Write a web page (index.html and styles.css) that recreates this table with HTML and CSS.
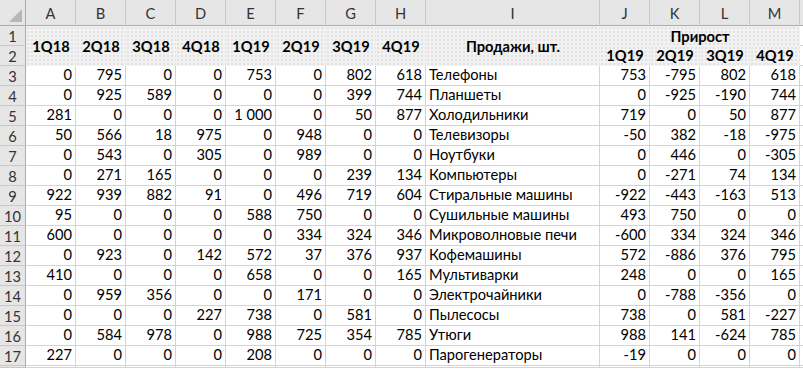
FILE: index.html
```html
<!DOCTYPE html>
<html>
<head>
<meta charset="utf-8">
<link rel="stylesheet" href="styles.css">
</head>
<body>
<div class="sheet">
  <div class="ch corner"><span class="tri"></span></div>
  <div class="ch">A</div><div class="ch">B</div><div class="ch">C</div><div class="ch">D</div>
  <div class="ch">E</div><div class="ch">F</div><div class="ch">G</div><div class="ch">H</div>
  <div class="ch">I</div><div class="ch">J</div><div class="ch">K</div><div class="ch">L</div><div class="ch">M</div>
  <div class="ch blank"></div>

  <div class="rh r1">1</div>
  <div class="hd span2 c2">1Q18</div>
  <div class="hd span2 c3">2Q18</div>
  <div class="hd span2 c4">3Q18</div>
  <div class="hd span2 c5">4Q18</div>
  <div class="hd span2 c6">1Q19</div>
  <div class="hd span2 c7">2Q19</div>
  <div class="hd span2 c8">3Q19</div>
  <div class="hd span2 c9">4Q19</div>
  <div class="hd span2 c10">Продажи, шт.</div>
  <div class="hd top">Прирост</div>
  <div class="cell nc n1"></div>
  <div class="rh r2">2</div>
  <div class="hd sub c11">1Q19</div>
  <div class="hd sub c12">2Q19</div>
  <div class="hd sub c13">3Q19</div>
  <div class="hd sub c14">4Q19</div>
  <div class="cell nc n2"></div>

  <div class="rh">3</div><div class="cell">0</div><div class="cell">795</div><div class="cell">0</div><div class="cell">0</div><div class="cell">753</div><div class="cell">0</div><div class="cell">802</div><div class="cell">618</div><div class="cell name">Телефоны</div><div class="cell">753</div><div class="cell">-795</div><div class="cell">802</div><div class="cell">618</div><div class="cell nc"></div>
  <div class="rh">4</div><div class="cell">0</div><div class="cell">925</div><div class="cell">589</div><div class="cell">0</div><div class="cell">0</div><div class="cell">0</div><div class="cell">399</div><div class="cell">744</div><div class="cell name">Планшеты</div><div class="cell">0</div><div class="cell">-925</div><div class="cell">-190</div><div class="cell">744</div><div class="cell nc"></div>
  <div class="rh">5</div><div class="cell">281</div><div class="cell">0</div><div class="cell">0</div><div class="cell">0</div><div class="cell">1 000</div><div class="cell">0</div><div class="cell">50</div><div class="cell">877</div><div class="cell name">Холодильники</div><div class="cell">719</div><div class="cell">0</div><div class="cell">50</div><div class="cell">877</div><div class="cell nc"></div>
  <div class="rh">6</div><div class="cell">50</div><div class="cell">566</div><div class="cell">18</div><div class="cell">975</div><div class="cell">0</div><div class="cell">948</div><div class="cell">0</div><div class="cell">0</div><div class="cell name">Телевизоры</div><div class="cell">-50</div><div class="cell">382</div><div class="cell">-18</div><div class="cell">-975</div><div class="cell nc"></div>
  <div class="rh">7</div><div class="cell">0</div><div class="cell">543</div><div class="cell">0</div><div class="cell">305</div><div class="cell">0</div><div class="cell">989</div><div class="cell">0</div><div class="cell">0</div><div class="cell name">Ноутбуки</div><div class="cell">0</div><div class="cell">446</div><div class="cell">0</div><div class="cell">-305</div><div class="cell nc"></div>
  <div class="rh">8</div><div class="cell">0</div><div class="cell">271</div><div class="cell">165</div><div class="cell">0</div><div class="cell">0</div><div class="cell">0</div><div class="cell">239</div><div class="cell">134</div><div class="cell name">Компьютеры</div><div class="cell">0</div><div class="cell">-271</div><div class="cell">74</div><div class="cell">134</div><div class="cell nc"></div>
  <div class="rh">9</div><div class="cell">922</div><div class="cell">939</div><div class="cell">882</div><div class="cell">91</div><div class="cell">0</div><div class="cell">496</div><div class="cell">719</div><div class="cell">604</div><div class="cell name">Стиральные машины</div><div class="cell">-922</div><div class="cell">-443</div><div class="cell">-163</div><div class="cell">513</div><div class="cell nc"></div>
  <div class="rh">10</div><div class="cell">95</div><div class="cell">0</div><div class="cell">0</div><div class="cell">0</div><div class="cell">588</div><div class="cell">750</div><div class="cell">0</div><div class="cell">0</div><div class="cell name">Сушильные машины</div><div class="cell">493</div><div class="cell">750</div><div class="cell">0</div><div class="cell">0</div><div class="cell nc"></div>
  <div class="rh">11</div><div class="cell">600</div><div class="cell">0</div><div class="cell">0</div><div class="cell">0</div><div class="cell">0</div><div class="cell">334</div><div class="cell">324</div><div class="cell">346</div><div class="cell name">Микроволновые печи</div><div class="cell">-600</div><div class="cell">334</div><div class="cell">324</div><div class="cell">346</div><div class="cell nc"></div>
  <div class="rh">12</div><div class="cell">0</div><div class="cell">923</div><div class="cell">0</div><div class="cell">142</div><div class="cell">572</div><div class="cell">37</div><div class="cell">376</div><div class="cell">937</div><div class="cell name">Кофемашины</div><div class="cell">572</div><div class="cell">-886</div><div class="cell">376</div><div class="cell">795</div><div class="cell nc"></div>
  <div class="rh">13</div><div class="cell">410</div><div class="cell">0</div><div class="cell">0</div><div class="cell">0</div><div class="cell">658</div><div class="cell">0</div><div class="cell">0</div><div class="cell">165</div><div class="cell name">Мультиварки</div><div class="cell">248</div><div class="cell">0</div><div class="cell">0</div><div class="cell">165</div><div class="cell nc"></div>
  <div class="rh">14</div><div class="cell">0</div><div class="cell">959</div><div class="cell">356</div><div class="cell">0</div><div class="cell">0</div><div class="cell">171</div><div class="cell">0</div><div class="cell">0</div><div class="cell name">Электрочайники</div><div class="cell">0</div><div class="cell">-788</div><div class="cell">-356</div><div class="cell">0</div><div class="cell nc"></div>
  <div class="rh">15</div><div class="cell">0</div><div class="cell">0</div><div class="cell">0</div><div class="cell">227</div><div class="cell">738</div><div class="cell">0</div><div class="cell">581</div><div class="cell">0</div><div class="cell name">Пылесосы</div><div class="cell">738</div><div class="cell">0</div><div class="cell">581</div><div class="cell">-227</div><div class="cell nc"></div>
  <div class="rh">16</div><div class="cell">0</div><div class="cell">584</div><div class="cell">978</div><div class="cell">0</div><div class="cell">988</div><div class="cell">725</div><div class="cell">354</div><div class="cell">785</div><div class="cell name">Утюги</div><div class="cell">988</div><div class="cell">141</div><div class="cell">-624</div><div class="cell">785</div><div class="cell nc"></div>
  <div class="rh">17</div><div class="cell">227</div><div class="cell">0</div><div class="cell">0</div><div class="cell">0</div><div class="cell">208</div><div class="cell">0</div><div class="cell">0</div><div class="cell">0</div><div class="cell name">Парогенераторы</div><div class="cell">-19</div><div class="cell">0</div><div class="cell">0</div><div class="cell">0</div><div class="cell nc"></div>
  <div class="rh"></div><div class="cell"></div><div class="cell"></div><div class="cell"></div><div class="cell"></div><div class="cell"></div><div class="cell"></div><div class="cell"></div><div class="cell"></div><div class="cell"></div><div class="cell"></div><div class="cell"></div><div class="cell"></div><div class="cell"></div><div class="cell nc"></div>
</div>
</body>
</html>
```

FILE: styles.css
```css
html, body {
  margin: 0;
  padding: 0;
  background: #ffffff;
  overflow: hidden;
}
.sheet {
  display: grid;
  grid-template-columns: 26px repeat(8, 50px) 174px repeat(4, 50px) 1fr;
  grid-template-rows: 26px repeat(17, 20px);
  width: 803px;
  font-family: Lato, "Open Sans", sans-serif;
  font-size: 14.67px;
  color: #000;
}
.sheet > div {
  box-sizing: border-box;
  overflow: hidden;
  white-space: nowrap;
}
.ch {
  background: #e6e6e6;
  border-right: 1px solid #c8c8c8;
  border-bottom: 1px solid #ababab;
  color: #333;
  display: flex;
  align-items: center;
  justify-content: center;
  padding-top: 1px;
}
.ch.blank {
  border-right: none;
}
.corner {
  position: relative;
  border-right: 1px solid #ababab;
}
.tri {
  position: absolute;
  right: 3px;
  bottom: 3px;
  width: 0;
  height: 0;
  border-left: 13px solid transparent;
  border-bottom: 13px solid #b7b7b7;
}
.rh {
  background: #e6e6e6;
  border-right: 1px solid #ababab;
  border-bottom: 1px solid #c8c8c8;
  color: #333;
  display: flex;
  align-items: center;
  justify-content: center;
  padding-top: 1px;
}
.cell {
  border-right: 1px solid #d4d4d4;
  border-bottom: 1px solid #d4d4d4;
  display: flex;
  align-items: flex-end;
  justify-content: flex-end;
  padding: 0 3px 1px 3px;
  line-height: 18px;
}
.cell.name {
  justify-content: flex-start;
  overflow: visible;
}
.cell.nc {
  border-right: none;
}
.hd {
  background-color: #f2f2f2;
  background-image: radial-gradient(circle, #e0e0e0 0.7px, transparent 0.8px);
  background-size: 4px 4px;
  font-weight: 700;
  display: flex;
  align-items: center;
  justify-content: center;
}
.r1 { grid-column: 1; grid-row: 2; }
.r2 { grid-column: 1; grid-row: 3; }
.n1 { grid-column: 15; grid-row: 2; }
.n2 { grid-column: 15; grid-row: 3; }
.span2 { grid-row: 2 / span 2; }
.c2 { grid-column: 2; }
.c3 { grid-column: 3; }
.c4 { grid-column: 4; }
.c5 { grid-column: 5; }
.c6 { grid-column: 6; }
.c7 { grid-column: 7; }
.c8 { grid-column: 8; }
.c9 { grid-column: 9; }
.c10 { grid-column: 10; }
.c11 { grid-column: 11; }
.c12 { grid-column: 12; }
.c13 { grid-column: 13; }
.c14 { grid-column: 14; }
.top {
  grid-column: 11 / span 4;
  grid-row: 2;
  padding-top: 1px;
}
.sub {
  grid-row: 3;
  padding-bottom: 1px;
}
```
